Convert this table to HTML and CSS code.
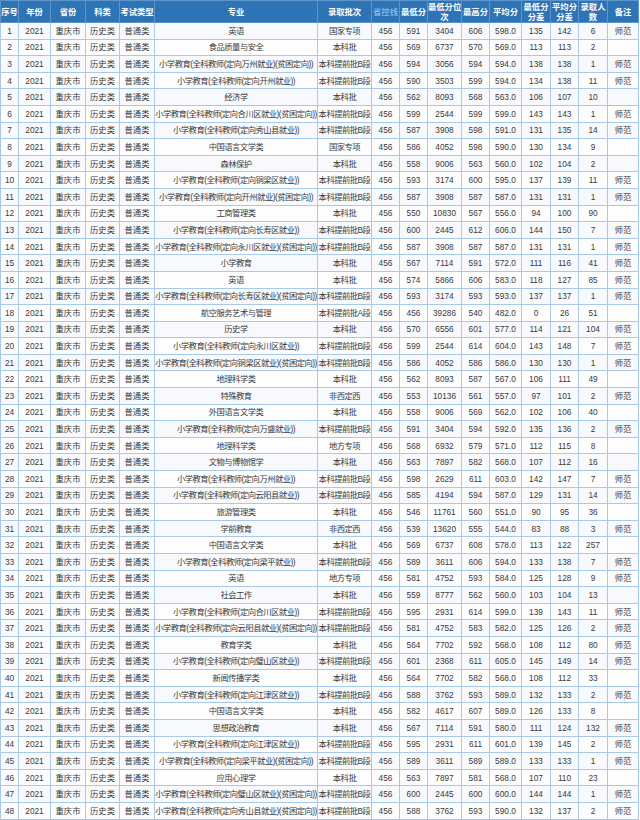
FILE: index.html
```html
<!DOCTYPE html>
<html lang="zh">
<head>
<meta charset="utf-8">
<title>录取分数</title>
<link rel="stylesheet" href="styles.css">
</head>
<body>
<table class="score-table">
<colgroup>
<col class="c-no"><col class="c-year"><col class="c-prov"><col class="c-kind"><col class="c-type"><col class="c-major"><col class="c-batch"><col class="c-line"><col class="c-min"><col class="c-rank"><col class="c-max"><col class="c-avg"><col class="c-diff1"><col class="c-diff2"><col class="c-num"><col class="c-note">
</colgroup>
<thead>
<tr>
<th>序号</th><th>年份</th><th>省份</th><th>科类</th><th>考试类型</th><th>专业</th><th>录取批次</th><th class="muted">省控线</th><th>最低分</th><th class="two">最低分位<br>次</th><th>最高分</th><th>平均分</th><th class="two">最低分<br>分差</th><th class="two">平均分<br>分差</th><th class="two">录取人<br>数</th><th>备注</th>
</tr>
</thead>
<tbody>
<tr><td>1</td><td>2021</td><td>重庆市</td><td>历史类</td><td>普通类</td><td>英语</td><td>国家专项</td><td>456</td><td>591</td><td>3404</td><td>606</td><td>598.0</td><td>135</td><td>142</td><td>6</td><td>师范</td></tr>
<tr><td>2</td><td>2021</td><td>重庆市</td><td>历史类</td><td>普通类</td><td>食品质量与安全</td><td>本科批</td><td>456</td><td>569</td><td>6737</td><td>570</td><td>569.0</td><td>113</td><td>113</td><td>2</td><td></td></tr>
<tr><td>3</td><td>2021</td><td>重庆市</td><td>历史类</td><td>普通类</td><td>小学教育(全科教师(定向万州就业)(贫困定向))</td><td>本科提前批B段</td><td>456</td><td>594</td><td>3056</td><td>594</td><td>594.0</td><td>138</td><td>138</td><td>1</td><td>师范</td></tr>
<tr><td>4</td><td>2021</td><td>重庆市</td><td>历史类</td><td>普通类</td><td>小学教育(全科教师(定向开州就业))</td><td>本科提前批B段</td><td>456</td><td>590</td><td>3503</td><td>599</td><td>594.0</td><td>134</td><td>138</td><td>11</td><td>师范</td></tr>
<tr><td>5</td><td>2021</td><td>重庆市</td><td>历史类</td><td>普通类</td><td>经济学</td><td>本科批</td><td>456</td><td>562</td><td>8093</td><td>568</td><td>563.0</td><td>106</td><td>107</td><td>10</td><td></td></tr>
<tr><td>6</td><td>2021</td><td>重庆市</td><td>历史类</td><td>普通类</td><td>小学教育(全科教师(定向合川区就业)(贫困定向))</td><td>本科提前批B段</td><td>456</td><td>599</td><td>2544</td><td>599</td><td>599.0</td><td>143</td><td>143</td><td>1</td><td>师范</td></tr>
<tr><td>7</td><td>2021</td><td>重庆市</td><td>历史类</td><td>普通类</td><td>小学教育(全科教师(定向秀山县就业))</td><td>本科提前批B段</td><td>456</td><td>587</td><td>3908</td><td>598</td><td>591.0</td><td>131</td><td>135</td><td>14</td><td>师范</td></tr>
<tr><td>8</td><td>2021</td><td>重庆市</td><td>历史类</td><td>普通类</td><td>中国语言文学类</td><td>国家专项</td><td>456</td><td>586</td><td>4052</td><td>598</td><td>590.0</td><td>130</td><td>134</td><td>9</td><td></td></tr>
<tr><td>9</td><td>2021</td><td>重庆市</td><td>历史类</td><td>普通类</td><td>森林保护</td><td>本科批</td><td>456</td><td>558</td><td>9006</td><td>563</td><td>560.0</td><td>102</td><td>104</td><td>2</td><td></td></tr>
<tr><td>10</td><td>2021</td><td>重庆市</td><td>历史类</td><td>普通类</td><td>小学教育(全科教师(定向铜梁区就业))</td><td>本科提前批B段</td><td>456</td><td>593</td><td>3174</td><td>600</td><td>595.0</td><td>137</td><td>139</td><td>11</td><td>师范</td></tr>
<tr><td>11</td><td>2021</td><td>重庆市</td><td>历史类</td><td>普通类</td><td>小学教育(全科教师(定向开州就业)(贫困定向))</td><td>本科提前批B段</td><td>456</td><td>587</td><td>3908</td><td>587</td><td>587.0</td><td>131</td><td>131</td><td>1</td><td>师范</td></tr>
<tr><td>12</td><td>2021</td><td>重庆市</td><td>历史类</td><td>普通类</td><td>工商管理类</td><td>本科批</td><td>456</td><td>550</td><td>10830</td><td>567</td><td>556.0</td><td>94</td><td>100</td><td>90</td><td></td></tr>
<tr><td>13</td><td>2021</td><td>重庆市</td><td>历史类</td><td>普通类</td><td>小学教育(全科教师(定向长寿区就业))</td><td>本科提前批B段</td><td>456</td><td>600</td><td>2445</td><td>612</td><td>606.0</td><td>144</td><td>150</td><td>7</td><td>师范</td></tr>
<tr><td>14</td><td>2021</td><td>重庆市</td><td>历史类</td><td>普通类</td><td>小学教育(全科教师(定向永川区就业)(贫困定向))</td><td>本科提前批B段</td><td>456</td><td>587</td><td>3908</td><td>587</td><td>587.0</td><td>131</td><td>131</td><td>1</td><td>师范</td></tr>
<tr><td>15</td><td>2021</td><td>重庆市</td><td>历史类</td><td>普通类</td><td>小学教育</td><td>本科批</td><td>456</td><td>567</td><td>7114</td><td>591</td><td>572.0</td><td>111</td><td>116</td><td>41</td><td>师范</td></tr>
<tr><td>16</td><td>2021</td><td>重庆市</td><td>历史类</td><td>普通类</td><td>英语</td><td>本科批</td><td>456</td><td>574</td><td>5866</td><td>606</td><td>583.0</td><td>118</td><td>127</td><td>85</td><td>师范</td></tr>
<tr><td>17</td><td>2021</td><td>重庆市</td><td>历史类</td><td>普通类</td><td>小学教育(全科教师(定向长寿区就业)(贫困定向))</td><td>本科提前批B段</td><td>456</td><td>593</td><td>3174</td><td>593</td><td>593.0</td><td>137</td><td>137</td><td>1</td><td>师范</td></tr>
<tr><td>18</td><td>2021</td><td>重庆市</td><td>历史类</td><td>普通类</td><td>航空服务艺术与管理</td><td>本科提前批A段</td><td>456</td><td>456</td><td>39286</td><td>540</td><td>482.0</td><td>0</td><td>26</td><td>51</td><td></td></tr>
<tr><td>19</td><td>2021</td><td>重庆市</td><td>历史类</td><td>普通类</td><td>历史学</td><td>本科批</td><td>456</td><td>570</td><td>6556</td><td>601</td><td>577.0</td><td>114</td><td>121</td><td>104</td><td>师范</td></tr>
<tr><td>20</td><td>2021</td><td>重庆市</td><td>历史类</td><td>普通类</td><td>小学教育(全科教师(定向永川区就业))</td><td>本科提前批B段</td><td>456</td><td>599</td><td>2544</td><td>614</td><td>604.0</td><td>143</td><td>148</td><td>7</td><td>师范</td></tr>
<tr><td>21</td><td>2021</td><td>重庆市</td><td>历史类</td><td>普通类</td><td>小学教育(全科教师(定向铜梁区就业)(贫困定向))</td><td>本科提前批B段</td><td>456</td><td>586</td><td>4052</td><td>586</td><td>586.0</td><td>130</td><td>130</td><td>1</td><td>师范</td></tr>
<tr><td>22</td><td>2021</td><td>重庆市</td><td>历史类</td><td>普通类</td><td>地理科学类</td><td>本科批</td><td>456</td><td>562</td><td>8093</td><td>587</td><td>567.0</td><td>106</td><td>111</td><td>49</td><td></td></tr>
<tr><td>23</td><td>2021</td><td>重庆市</td><td>历史类</td><td>普通类</td><td>特殊教育</td><td>非西定西</td><td>456</td><td>553</td><td>10136</td><td>561</td><td>557.0</td><td>97</td><td>101</td><td>2</td><td>师范</td></tr>
<tr><td>24</td><td>2021</td><td>重庆市</td><td>历史类</td><td>普通类</td><td>外国语言文学类</td><td>本科批</td><td>456</td><td>558</td><td>9006</td><td>569</td><td>562.0</td><td>102</td><td>106</td><td>40</td><td></td></tr>
<tr><td>25</td><td>2021</td><td>重庆市</td><td>历史类</td><td>普通类</td><td>小学教育(全科教师(定向万盛就业))</td><td>本科提前批B段</td><td>456</td><td>591</td><td>3404</td><td>594</td><td>592.0</td><td>135</td><td>136</td><td>2</td><td>师范</td></tr>
<tr><td>26</td><td>2021</td><td>重庆市</td><td>历史类</td><td>普通类</td><td>地理科学类</td><td>地方专项</td><td>456</td><td>568</td><td>6932</td><td>579</td><td>571.0</td><td>112</td><td>115</td><td>8</td><td></td></tr>
<tr><td>27</td><td>2021</td><td>重庆市</td><td>历史类</td><td>普通类</td><td>文物与博物馆学</td><td>本科批</td><td>456</td><td>563</td><td>7897</td><td>582</td><td>568.0</td><td>107</td><td>112</td><td>16</td><td></td></tr>
<tr><td>28</td><td>2021</td><td>重庆市</td><td>历史类</td><td>普通类</td><td>小学教育(全科教师(定向万州就业))</td><td>本科提前批B段</td><td>456</td><td>598</td><td>2629</td><td>611</td><td>603.0</td><td>142</td><td>147</td><td>7</td><td>师范</td></tr>
<tr><td>29</td><td>2021</td><td>重庆市</td><td>历史类</td><td>普通类</td><td>小学教育(全科教师(定向云阳县就业))</td><td>本科提前批B段</td><td>456</td><td>585</td><td>4194</td><td>594</td><td>587.0</td><td>129</td><td>131</td><td>14</td><td>师范</td></tr>
<tr><td>30</td><td>2021</td><td>重庆市</td><td>历史类</td><td>普通类</td><td>旅游管理类</td><td>本科批</td><td>456</td><td>546</td><td>11761</td><td>560</td><td>551.0</td><td>90</td><td>95</td><td>36</td><td></td></tr>
<tr><td>31</td><td>2021</td><td>重庆市</td><td>历史类</td><td>普通类</td><td>学前教育</td><td>非西定西</td><td>456</td><td>539</td><td>13620</td><td>555</td><td>544.0</td><td>83</td><td>88</td><td>3</td><td>师范</td></tr>
<tr><td>32</td><td>2021</td><td>重庆市</td><td>历史类</td><td>普通类</td><td>中国语言文学类</td><td>本科批</td><td>456</td><td>569</td><td>6737</td><td>608</td><td>578.0</td><td>113</td><td>122</td><td>257</td><td></td></tr>
<tr><td>33</td><td>2021</td><td>重庆市</td><td>历史类</td><td>普通类</td><td>小学教育(全科教师(定向梁平就业))</td><td>本科提前批B段</td><td>456</td><td>589</td><td>3611</td><td>606</td><td>594.0</td><td>133</td><td>138</td><td>7</td><td>师范</td></tr>
<tr><td>34</td><td>2021</td><td>重庆市</td><td>历史类</td><td>普通类</td><td>英语</td><td>地方专项</td><td>456</td><td>581</td><td>4752</td><td>593</td><td>584.0</td><td>125</td><td>128</td><td>9</td><td>师范</td></tr>
<tr><td>35</td><td>2021</td><td>重庆市</td><td>历史类</td><td>普通类</td><td>社会工作</td><td>本科批</td><td>456</td><td>559</td><td>8777</td><td>562</td><td>560.0</td><td>103</td><td>104</td><td>13</td><td></td></tr>
<tr><td>36</td><td>2021</td><td>重庆市</td><td>历史类</td><td>普通类</td><td>小学教育(全科教师(定向合川区就业))</td><td>本科提前批B段</td><td>456</td><td>595</td><td>2931</td><td>614</td><td>599.0</td><td>139</td><td>143</td><td>11</td><td>师范</td></tr>
<tr><td>37</td><td>2021</td><td>重庆市</td><td>历史类</td><td>普通类</td><td>小学教育(全科教师(定向云阳县就业)(贫困定向))</td><td>本科提前批B段</td><td>456</td><td>581</td><td>4752</td><td>583</td><td>582.0</td><td>125</td><td>126</td><td>2</td><td>师范</td></tr>
<tr><td>38</td><td>2021</td><td>重庆市</td><td>历史类</td><td>普通类</td><td>教育学类</td><td>本科批</td><td>456</td><td>564</td><td>7702</td><td>592</td><td>568.0</td><td>108</td><td>112</td><td>80</td><td>师范</td></tr>
<tr><td>39</td><td>2021</td><td>重庆市</td><td>历史类</td><td>普通类</td><td>小学教育(全科教师(定向璧山区就业))</td><td>本科提前批B段</td><td>456</td><td>601</td><td>2368</td><td>611</td><td>605.0</td><td>145</td><td>149</td><td>14</td><td>师范</td></tr>
<tr><td>40</td><td>2021</td><td>重庆市</td><td>历史类</td><td>普通类</td><td>新闻传播学类</td><td>本科批</td><td>456</td><td>564</td><td>7702</td><td>582</td><td>568.0</td><td>108</td><td>112</td><td>33</td><td></td></tr>
<tr><td>41</td><td>2021</td><td>重庆市</td><td>历史类</td><td>普通类</td><td>小学教育(全科教师(定向江津区就业))</td><td>本科提前批B段</td><td>456</td><td>588</td><td>3762</td><td>593</td><td>589.0</td><td>132</td><td>133</td><td>2</td><td>师范</td></tr>
<tr><td>42</td><td>2021</td><td>重庆市</td><td>历史类</td><td>普通类</td><td>中国语言文学类</td><td>本科批</td><td>456</td><td>582</td><td>4617</td><td>607</td><td>589.0</td><td>126</td><td>133</td><td>8</td><td></td></tr>
<tr><td>43</td><td>2021</td><td>重庆市</td><td>历史类</td><td>普通类</td><td>思想政治教育</td><td>本科批</td><td>456</td><td>567</td><td>7114</td><td>591</td><td>580.0</td><td>111</td><td>124</td><td>132</td><td>师范</td></tr>
<tr><td>44</td><td>2021</td><td>重庆市</td><td>历史类</td><td>普通类</td><td>小学教育(全科教师(定向江津区就业))</td><td>本科提前批B段</td><td>456</td><td>595</td><td>2931</td><td>611</td><td>601.0</td><td>139</td><td>145</td><td>2</td><td>师范</td></tr>
<tr><td>45</td><td>2021</td><td>重庆市</td><td>历史类</td><td>普通类</td><td>小学教育(全科教师(定向梁平就业)(贫困定向))</td><td>本科提前批B段</td><td>456</td><td>589</td><td>3611</td><td>589</td><td>589.0</td><td>133</td><td>133</td><td>1</td><td>师范</td></tr>
<tr><td>46</td><td>2021</td><td>重庆市</td><td>历史类</td><td>普通类</td><td>应用心理学</td><td>本科批</td><td>456</td><td>563</td><td>7897</td><td>581</td><td>568.0</td><td>107</td><td>110</td><td>23</td><td></td></tr>
<tr><td>47</td><td>2021</td><td>重庆市</td><td>历史类</td><td>普通类</td><td>小学教育(全科教师(定向璧山区就业)(贫困定向))</td><td>本科提前批B段</td><td>456</td><td>600</td><td>2445</td><td>600</td><td>600.0</td><td>144</td><td>144</td><td>1</td><td>师范</td></tr>
<tr><td>48</td><td>2021</td><td>重庆市</td><td>历史类</td><td>普通类</td><td>小学教育(全科教师(定向秀山县就业)(贫困定向))</td><td>本科提前批B段</td><td>456</td><td>588</td><td>3762</td><td>593</td><td>590.0</td><td>132</td><td>137</td><td>2</td><td>师范</td></tr>
</tbody>
</table>
</body>
</html>
```
FILE: styles.css
```css
html, body {
  margin: 0;
  padding: 0;
  background: #ffffff;
}

.score-table {
  border-collapse: collapse;
  table-layout: fixed;
  width: 639px;
  font-family: "Liberation Sans", "Noto Sans CJK SC", sans-serif;
  font-size: 8.3px;
  color: #3a3a3a;
}

.c-no { width: 18px; }
.c-year { width: 32px; }
.c-prov { width: 35px; }
.c-kind { width: 34px; }
.c-type { width: 35px; }
.c-major { width: 163px; }
.c-batch { width: 54px; }
.c-line { width: 28px; }
.c-min { width: 28px; }
.c-rank { width: 34px; }
.c-max { width: 28px; }
.c-avg { width: 32px; }
.c-diff1 { width: 29px; }
.c-diff2 { width: 28px; }
.c-num { width: 29px; }
.c-note { width: 31px; }

.score-table th {
  height: 21px;
  padding: 0;
  background: #2e74b5;
  color: #ffffff;
  font-weight: bold;
  font-size: 8.3px;
  line-height: 10px;
  text-align: center;
  vertical-align: middle;
  border: 1px solid #5b95cc;
  white-space: nowrap;
  overflow: hidden;
}

.score-table th.muted {
  color: #a9cdf0;
  font-weight: normal;
}

.score-table td {
  height: 15.6px;
  padding: 0;
  line-height: 10px;
  text-align: center;
  vertical-align: middle;
  border: 1px solid #a9c9e8;
  background: #f7f9fc;
  white-space: nowrap;
  overflow: hidden;
}

.score-table td:nth-child(6),
.score-table td:nth-child(7) {
  letter-spacing: -0.5px;
  text-overflow: clip;
}

.score-table tbody tr:nth-child(even) td {
  background: #fdfdfe;
}
```
